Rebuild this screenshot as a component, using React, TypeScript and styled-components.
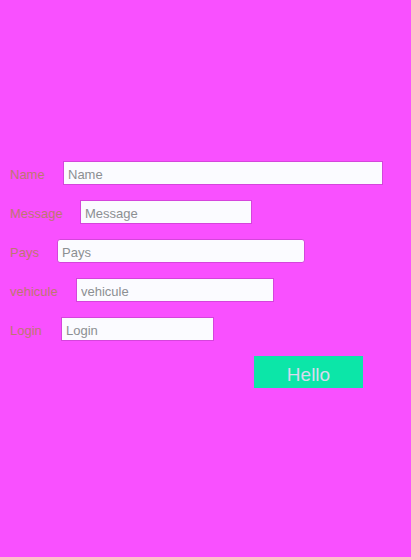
import React from "react";
import styled, { createGlobalStyle } from "styled-components";

const GlobalStyle = createGlobalStyle`
  * {
    box-sizing: border-box;
  }
  body {
    margin: 0;
    background: #f950ff;
    font-family: "Liberation Sans", Arial, sans-serif;
  }
`;

const Form = styled.form`
  display: flex;
  flex-direction: column;
  gap: 15px;
  padding: 161px 28px 24px 10px;
`;

const Row = styled.div`
  display: flex;
  align-items: center;
  gap: 20px;
`;

const Label = styled.label<{ $width: number }>`
  flex: 0 0 ${({ $width }) => $width}px;
  min-width: 0;
  padding-top: 3px;
  color: #bd7672;
  font-size: 13px;
  line-height: 21px;
  white-space: nowrap;
`;

const Input = styled.input<{ $width: number; $rounded?: boolean }>`
  flex: 0 1 ${({ $width }) => $width}px;
  min-width: 0;
  height: 24px;
  padding: 3px 4px 0;
  border: 1px solid #d545dc;
  border-radius: ${({ $rounded }) => ($rounded ? 3 : 0)}px;
  background: #fbfbff;
  color: #444;
  font-family: inherit;
  font-size: 13px;

  &::placeholder {
    color: #8c8f92;
    opacity: 1;
  }
`;

const SubmitButton = styled.button`
  align-self: flex-end;
  width: 109px;
  height: 32px;
  margin-right: 20px;
  padding: 6px 0 0;
  border: 0;
  background: #0ce6a8;
  color: #d9d9ee;
  font-family: inherit;
  font-size: 19px;
  line-height: 26px;
`;

const fields = [
  { id: "name", label: "Name", labelWidth: 33, width: 320 },
  { id: "message", label: "Message", labelWidth: 50, width: 172 },
  { id: "pays", label: "Pays", labelWidth: 27, width: 248, rounded: true },
  { id: "vehicule", label: "vehicule", labelWidth: 46, width: 198 },
  { id: "login", label: "Login", labelWidth: 31, width: 153 },
];

export default function App() {
  return (
    <>
      <GlobalStyle />
      <Form onSubmit={(event) => event.preventDefault()}>
        {fields.map(({ id, label, labelWidth, width, rounded }) => (
          <Row key={id}>
            <Label htmlFor={id} $width={labelWidth}>
              {label}
            </Label>
            <Input id={id} name={id} type="text" placeholder={label} $width={width} $rounded={rounded} />
          </Row>
        ))}
        <SubmitButton type="submit">Hello</SubmitButton>
      </Form>
    </>
  );
}
